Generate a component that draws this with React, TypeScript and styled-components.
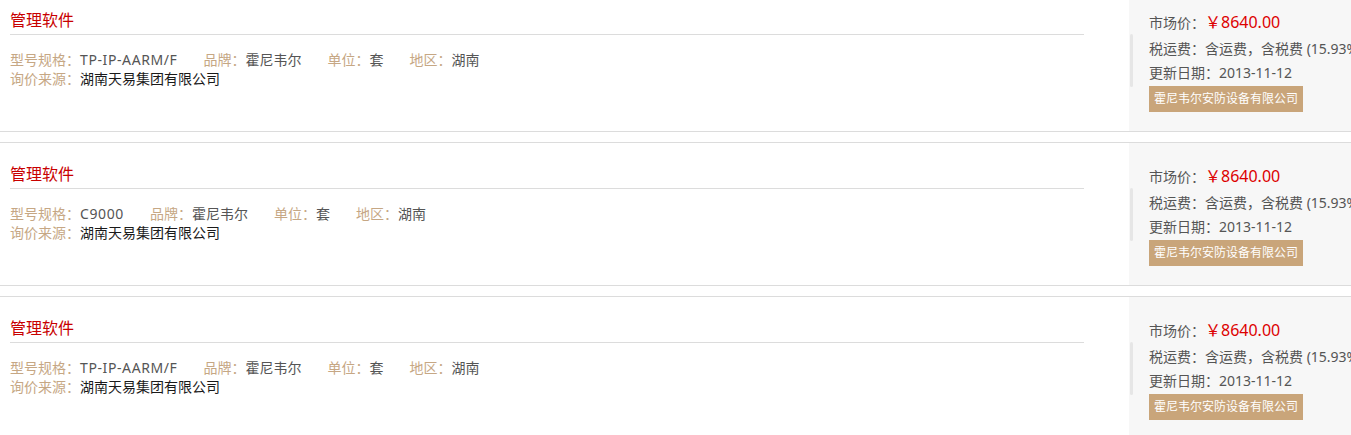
import React from 'react'
import styled, { createGlobalStyle } from 'styled-components'

interface IQuote {
    name: string
    model: string
    brand: string
    unit: string
    region: string
    source: string
    price: string
    tax: string
    updated: string
    supplier: string
}

const GlobalStyle = createGlobalStyle`
    body {
        margin: 0;
        background: #fff;
        overflow: hidden;
        font-family: 'Noto Sans', 'Noto Sans CJK SC', sans-serif;
    }
`

const List = styled.div`
    margin-top: -12px;
`

const Item = styled.div`
    display: flex;
    border-top: 1px solid #dcdcdc;
    border-bottom: 1px solid #dcdcdc;
    margin-bottom: 10px;
    height: 142px;
`

const Main = styled.div`
    flex: 1;
    padding: 0 45px 0 10px;
`

const Title = styled.div`
    padding-top: 20px;
    padding-bottom: 3px;
    line-height: 22px;
    font-size: 16px;
    color: #c80000;
    border-bottom: 1px solid #dcdcdc;
`

const Specs = styled.div<{ $first?: boolean }>`
    display: flex;
    margin-top: ${ p => p.$first ? 15 : 0 }px;
    font-size: 14px;
    line-height: 19px;
`

const Spec = styled.span`
    margin-right: 26px;
`

const Label = styled.span`
    color: #c6a784;
`

const Value = styled.span<{ $dark?: boolean, $latin?: boolean }>`
    color: ${ p => p.$dark ? '#1a1a1a' : '#555' };
    letter-spacing: ${ p => p.$latin ? '0.6px' : '0' };
`

const Side = styled.div`
    width: 222px;
    flex: none;
    display: flex;
    align-items: center;
    background: #f7f7f7;
    overflow: hidden;
    white-space: nowrap;
`

const Grip = styled.div`
    width: 3px;
    height: 53px;
    flex: none;
    margin-left: 1px;
    background: #e6e6e6;
    border-radius: 2px;
`

const Info = styled.div`
    padding-left: 16px;
    font-size: 14px;
    color: #555;
`

const Row = styled.div<{ $h: number }>`
    line-height: ${ p => p.$h }px;
`

const Price = styled.span`
    color: #dd0000;
    font-size: 16px;
`

const Supplier = styled.div`
    display: inline-block;
    margin-top: 2px;
    padding: 0 5px;
    line-height: 26px;
    font-size: 12px;
    color: #fff;
    background: #c9a57a;
`

const quote: IQuote = {
    name: '管理软件',
    model: 'TP-IP-AARM/F',
    brand: '霍尼韦尔',
    unit: '套',
    region: '湖南',
    source: '湖南天易集团有限公司',
    price: '￥8640.00',
    tax: '含运费，含税费 (15.93%)',
    updated: '2013-11-12',
    supplier: '霍尼韦尔安防设备有限公司'
}

const quotes: IQuote[] = [
    quote,
    { ...quote, model: 'C9000' },
    quote
]

export default function App() {
    return (
        <List>
            <GlobalStyle />
            { quotes.map((q, i) => (
                <Item key={ i }>
                    <Main>
                        <Title>{ q.name }</Title>
                        <Specs $first>
                            <Spec><Label>型号规格：</Label><Value $latin>{ q.model }</Value></Spec>
                            <Spec><Label>品牌：</Label><Value>{ q.brand }</Value></Spec>
                            <Spec><Label>单位：</Label><Value>{ q.unit }</Value></Spec>
                            <Spec><Label>地区：</Label><Value>{ q.region }</Value></Spec>
                        </Specs>
                        <Specs>
                            <Label>询价来源：</Label><Value $dark>{ q.source }</Value>
                        </Specs>
                    </Main>
                    <Side>
                        <Grip />
                        <Info>
                            <Row $h={ 26 }>市场价：<Price>{ q.price }</Price></Row>
                            <Row $h={ 26 }>税运费：{ q.tax }</Row>
                            <Row $h={ 22 }>更新日期：{ q.updated }</Row>
                            <Supplier>{ q.supplier }</Supplier>
                        </Info>
                    </Side>
                </Item>
            )) }
        </List>
    )
}
